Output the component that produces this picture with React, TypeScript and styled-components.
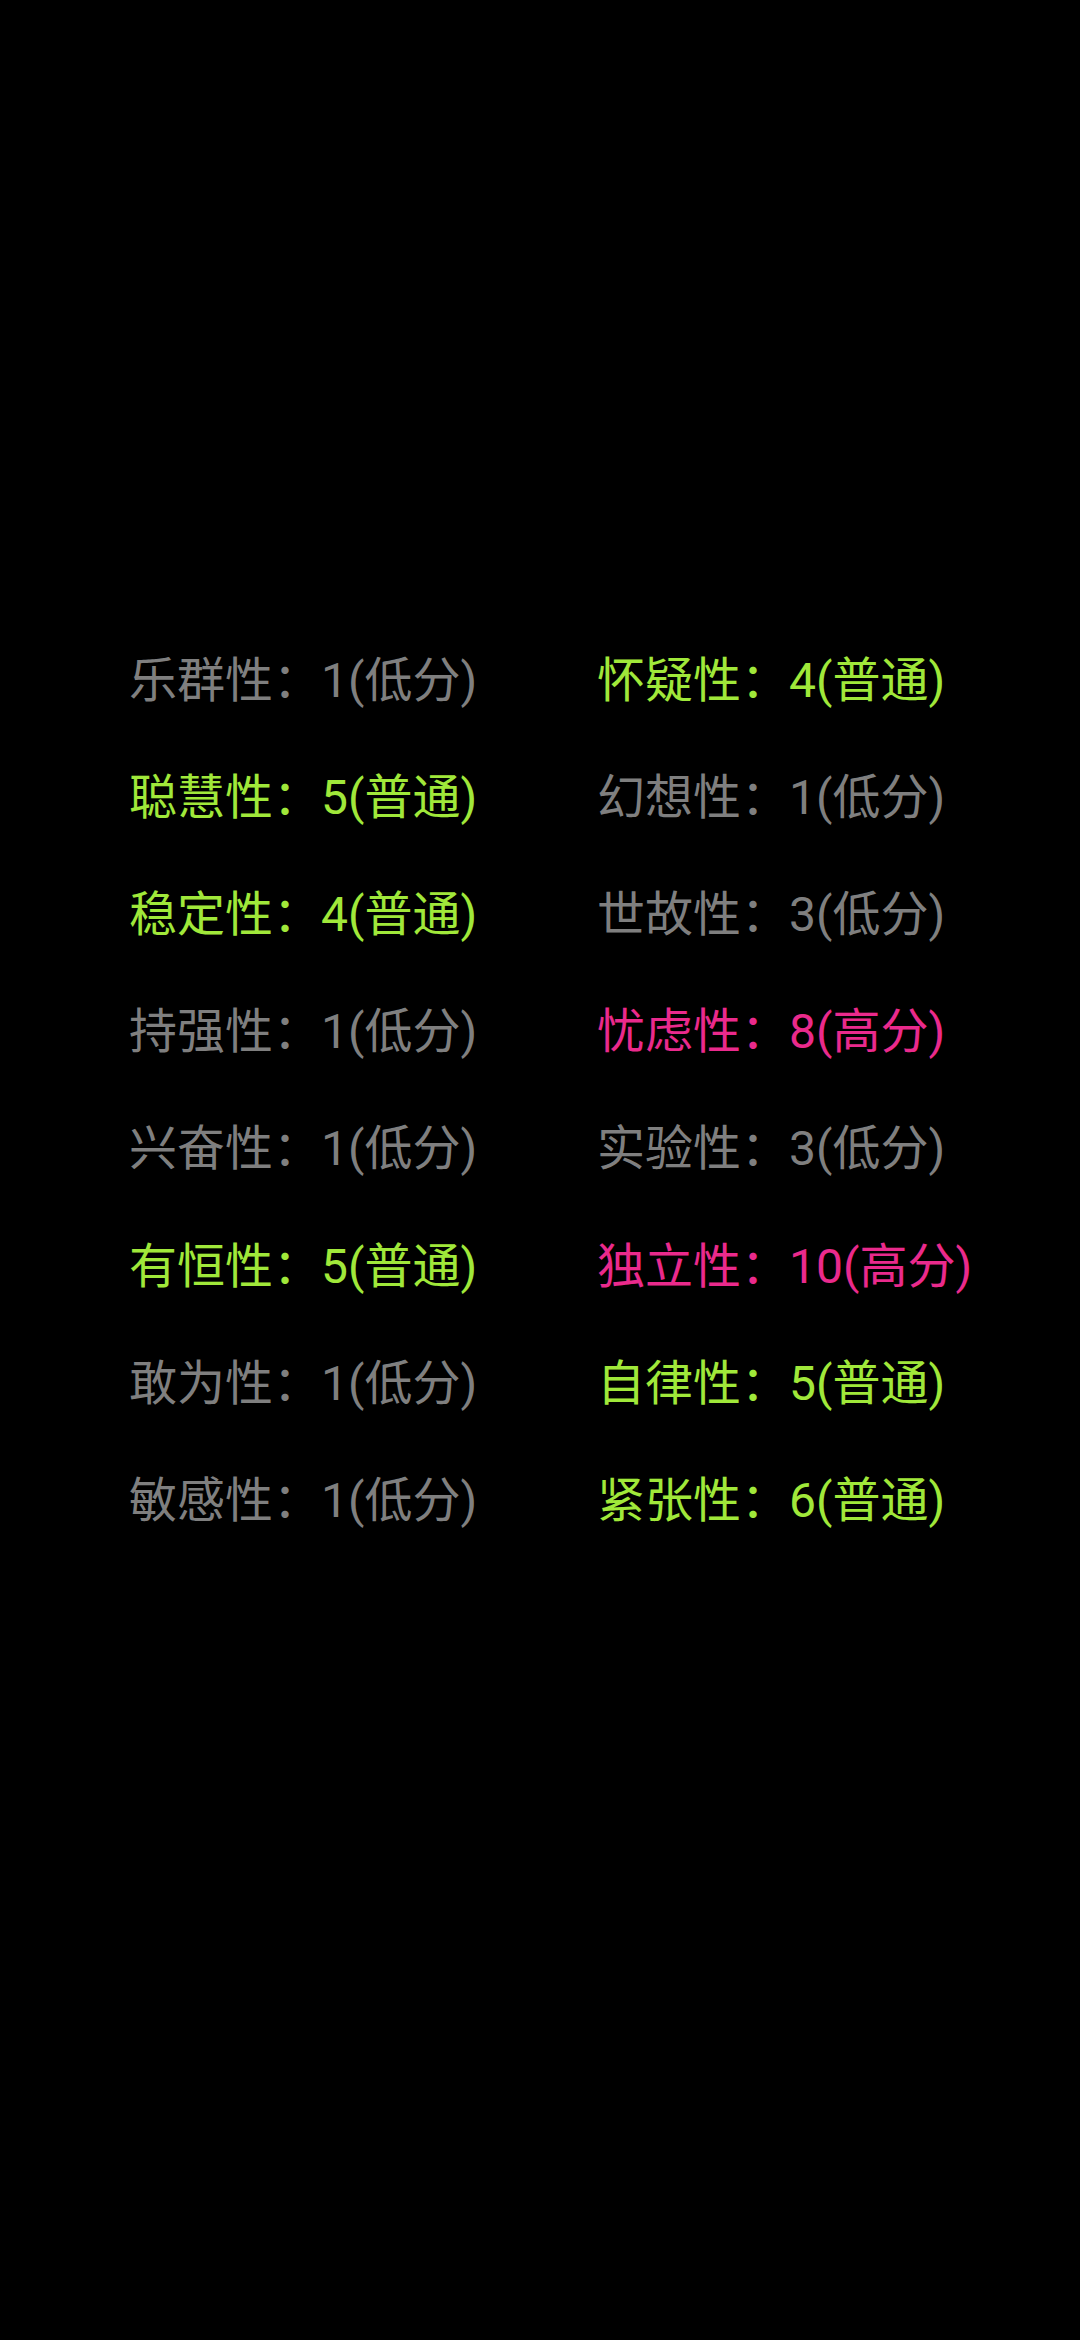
import React from "react";
import styled, { createGlobalStyle } from "styled-components";

const Global = createGlobalStyle`
  html, body { margin: 0; padding: 0; background: #000; }
  body { font-family: Roboto, "Noto Sans CJK SC", sans-serif; }
`;

const Page = styled.div`
  width: 1080px;
  height: 2340px;
  background: #000;
  box-sizing: border-box;
  padding-top: 622px;
  padding-left: 129px;
`;

const Grid = styled.div`
  display: grid;
  grid-template-columns: 468px 468px;
  grid-auto-rows: 117.2px;
`;

type Level = "low" | "normal" | "high";

const colors: Record<Level, string> = {
  low: "#7f7f7f",
  normal: "#a0e83a",
  high: "#ea2a8c",
};

const Item = styled.div<{ $level: Level }>`
  display: flex;
  align-items: center;
  font-family: Roboto, "Noto Sans CJK SC", sans-serif;
  font-size: 48px;
  line-height: 1;
  color: ${(p) => colors[p.$level]};
  white-space: nowrap;
`;

const items: { label: string; score: number; level: Level }[] = [
  { label: "乐群性", score: 1, level: "low" },
  { label: "怀疑性", score: 4, level: "normal" },
  { label: "聪慧性", score: 5, level: "normal" },
  { label: "幻想性", score: 1, level: "low" },
  { label: "稳定性", score: 4, level: "normal" },
  { label: "世故性", score: 3, level: "low" },
  { label: "持强性", score: 1, level: "low" },
  { label: "忧虑性", score: 8, level: "high" },
  { label: "兴奋性", score: 1, level: "low" },
  { label: "实验性", score: 3, level: "low" },
  { label: "有恒性", score: 5, level: "normal" },
  { label: "独立性", score: 10, level: "high" },
  { label: "敢为性", score: 1, level: "low" },
  { label: "自律性", score: 5, level: "normal" },
  { label: "敏感性", score: 1, level: "low" },
  { label: "紧张性", score: 6, level: "normal" },
];

const levelText: Record<Level, string> = {
  low: "低分",
  normal: "普通",
  high: "高分",
};

export default function App() {
  return (
    <>
      <Global />
      <Page>
        <Grid>
          {items.map((it) => (
            <Item key={it.label} $level={it.level}>
              {it.label}：{it.score}({levelText[it.level]})
            </Item>
          ))}
        </Grid>
      </Page>
    </>
  );
}
